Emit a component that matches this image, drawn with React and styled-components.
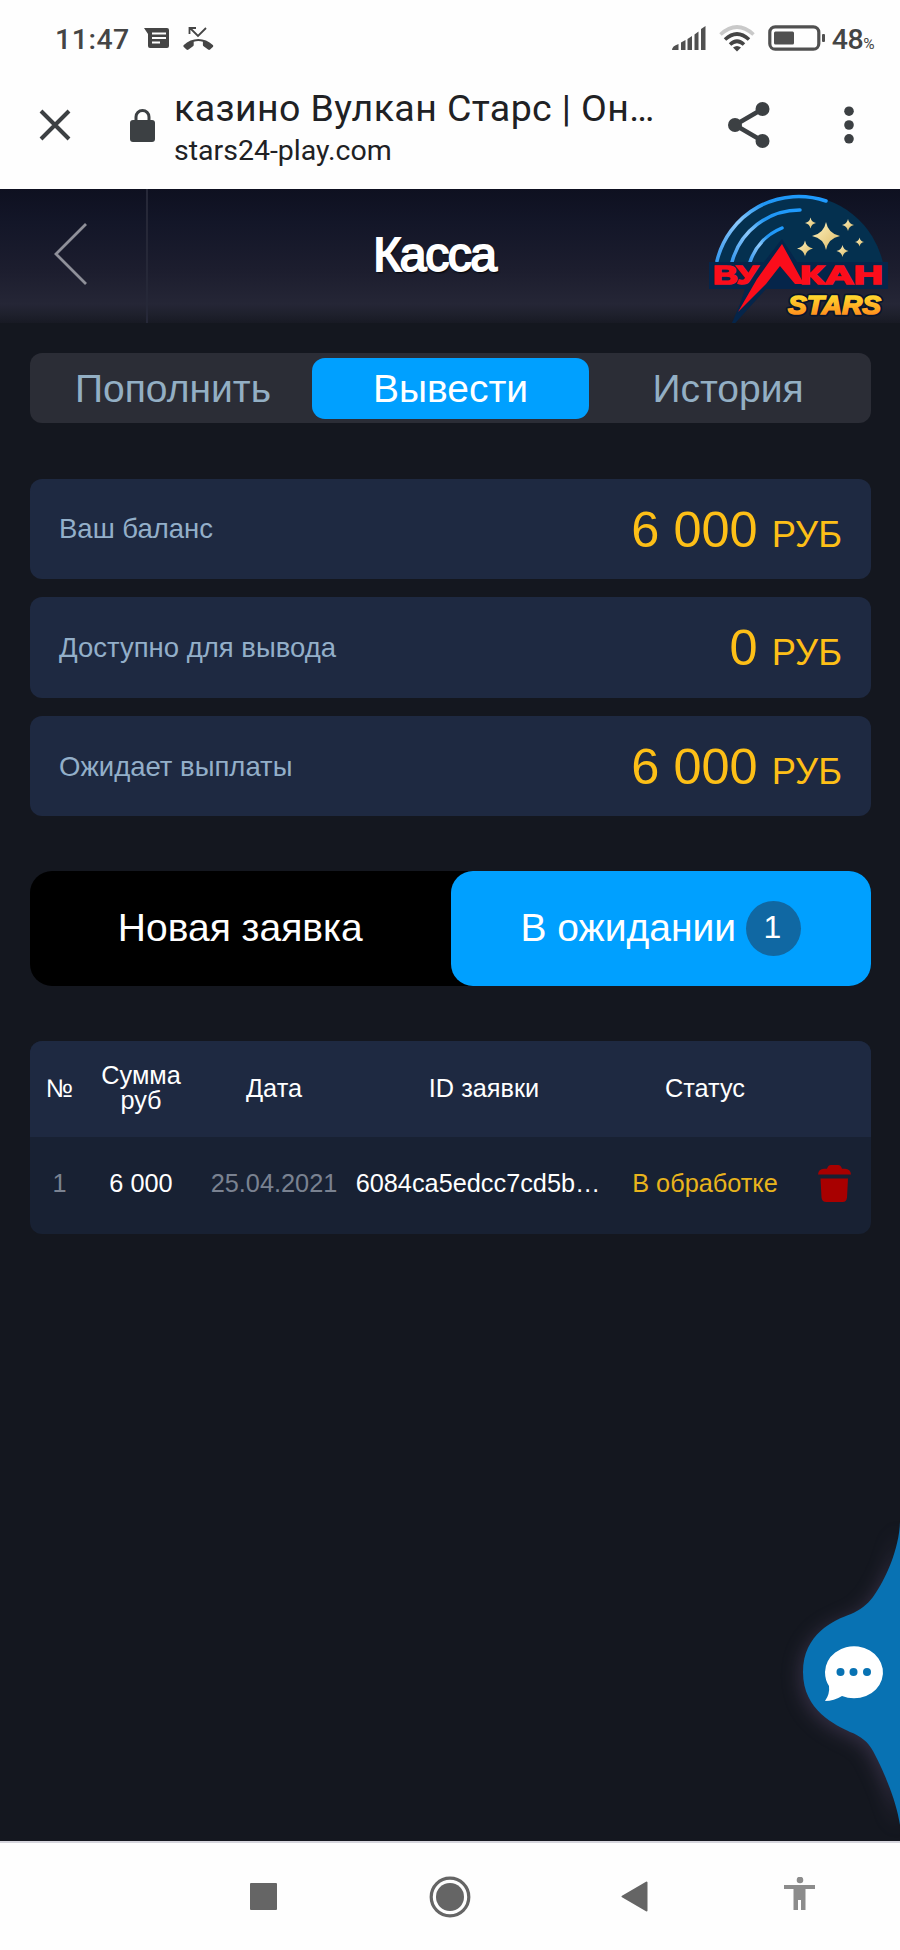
import styled, { createGlobalStyle, css } from "styled-components";

const GlobalStyle = createGlobalStyle`
  * {
    box-sizing: border-box;
  }

  body {
    margin: 0;
    background-color: #14171f;
    font-family: "Liberation Sans", Arial, sans-serif;
  }

  svg {
    display: block;
    flex-shrink: 0;
  }
`;

const Screen = styled.div`
  display: flex;
  flex-direction: column;
  width: 900px;
  height: 1950px;
  overflow: hidden;
`;

const StatusBar = styled.div`
  display: flex;
  align-items: center;
  height: 76px;
  padding: 0 26px 0 55px;
  background-color: #fefefe;
  color: #454545;
  font-family: Roboto, sans-serif;
`;

const Clock = styled.span`
  width: 89px;
  padding-top: 2px;
  font-size: 28.5px;
  font-weight: 500;
  letter-spacing: 0.5px;
  white-space: nowrap;
`;

const StatusIcons = styled.div`
  display: flex;
  align-items: center;
  gap: 13px;
  margin-right: auto;
`;

const Indicators = styled.div`
  display: flex;
  align-items: center;
`;

const Battery = styled.span`
  margin-left: 6px;
  padding-top: 2px;
  font-size: 28.5px;
  font-weight: 500;
  letter-spacing: -0.5px;
`;

const Percent = styled.small`
  font-size: 15.5px;
  font-weight: 400;
`;

const BrowserBar = styled.div`
  display: flex;
  align-items: center;
  height: 113px;
  padding: 0 41px 15px 39px;
  background-color: #fefefe;
  color: #202124;
  font-family: Roboto, sans-serif;
`;

const PageInfo = styled.div`
  width: 491px;
  margin-left: 18px;
  margin-right: 63px;
  padding-top: 8px;
  white-space: nowrap;
`;

const PageTitle = styled.div`
  font-size: 37.5px;
  line-height: 43px;
  letter-spacing: 0.4px;
`;

const PageUrl = styled.div`
  font-size: 28.5px;
  line-height: 41px;
`;

const Header = styled.header`
  display: flex;
  align-items: flex-start;
  height: 134px;
  background: linear-gradient(
    #0e1020 0%,
    #131628 25%,
    #1c1d2e 60%,
    #252636 86%,
    #1e202c 94%,
    #181a24 100%
  );
`;

const BackButton = styled.button`
  width: 148px;
  height: 134px;
  padding: 0 0 5px 54px;
  border: 0;
  border-right: 2px solid #262838;
  background: none;
`;

const HeaderTitle = styled.h1`
  flex: 1;
  margin: 0;
  padding-left: 31px;
  color: #fff;
  font-size: 48px;
  font-weight: 400;
  line-height: 132px;
  letter-spacing: -1.4px;
  text-align: center;
  text-shadow: 1px 2px 2px #000;
  -webkit-text-stroke: 2px #fff;
`;

const Content = styled.main`
  position: relative;
  flex: 1;
  padding: 30px 29px 0 30px;
  background-color: #14171f;
`;

const Tabs = styled.nav`
  display: grid;
  grid-template-columns: 277px 277px 277px;
  justify-content: space-between;
  height: 70px;
  padding: 4.5px;
  border-radius: 12px;
  background-color: #2b2d36;
`;

const Tab = styled.button`
  padding: 1px 0 0;
  border: 0;
  border-radius: 13px;
  background-color: ${({ $active }) => ($active ? "#00a0ff" : "transparent")};
  color: ${({ $active }) => ($active ? "#fff" : "#93afc4")};
  font-family: inherit;
  font-size: 39px;
`;

const Balances = styled.section`
  display: flex;
  flex-direction: column;
  gap: 18.5px;
  margin-top: 55.5px;
`;

const BalanceCard = styled.div`
  display: flex;
  justify-content: space-between;
  align-items: center;
  height: 100.3px;
  padding: 1px 29px 0 29px;
  border-radius: 12px;
  background-color: #1e2941;
`;

const BalanceLabel = styled.span`
  color: #93afc9;
  font-size: 27.5px;
`;

const BalanceValue = styled.span`
  color: #fdbf17;
  font-size: 50.5px;
`;

const Currency = styled.span`
  font-size: 36.3px;
`;

const Switcher = styled.div`
  display: grid;
  grid-template-columns: 1fr 1fr;
  height: 115px;
  margin-top: 54.5px;
  border-radius: 22px;
  background-color: #000;
`;

const SwitchButton = styled.button`
  display: flex;
  justify-content: center;
  align-items: center;
  gap: 10px;
  padding: 0;
  border: 0;
  border-radius: 22px;
  background-color: ${({ $active }) => ($active ? "#00a0ff" : "transparent")};
  color: #fff;
  font-family: inherit;
  font-size: 39px;
`;

const Badge = styled.span`
  width: 55px;
  height: 55px;
  border-radius: 50%;
  background-color: #1068a3;
  font-size: 32px;
  line-height: 53px;
  text-align: center;
  text-indent: -2px;
`;

const RequestTable = styled.section`
  margin-top: 55px;
  border-radius: 12px;
  background-color: #182133;
  overflow: hidden;
`;

const rowLayout = css`
  display: grid;
  grid-template-columns: 59px 104px 162px 258px 184px 1fr;
  align-items: center;
  justify-items: center;
  text-align: center;
  color: #fff;
  font-size: 25.3px;
  line-height: 25px;
`;

const TableHead = styled.div`
  ${rowLayout}
  height: 96px;
  padding-bottom: 1px;
  background-color: #1e2941;
`;

const TableRow = styled.div`
  ${rowLayout}
  height: 97px;
  padding-bottom: 3px;
`;

const Cell = styled.span`
  color: ${({ $color }) => $color || "#fff"};
  white-space: nowrap;
`;

const IdCell = styled(Cell)`
  margin-right: 12px;
`;

const ChatButton = styled.div`
  position: absolute;
  right: 0;
  bottom: 0;
`;

const NavBar = styled.footer`
  display: grid;
  grid-template-columns: 173px 200px 168px 1fr;
  align-items: center;
  justify-items: center;
  height: 109px;
  padding: 0 19px 0 177px;
  border-top: 2px solid #d5d5dd;
  background-color: #fefefe;
`;

const tabs = ["Пополнить", "Вывести", "История"];

const balances = [
  { label: "Ваш баланс", value: "6 000" },
  { label: "Доступно для вывода", value: "0" },
  { label: "Ожидает выплаты", value: "6 000" },
];

function StatusRow() {
  return (
    <StatusBar>
      <Clock>11:47</Clock>
      <StatusIcons>
        <svg width="26" height="22" viewBox="0 0 26 22">
          <path d="M0 1h23q2 0 2 2v16q0 2-2 2H6q-2 0-2-2V7Z" fill="#454545" />
          <path
            d="M8 6.5h14M8 11h14M8 15.5h8"
            stroke="#fff"
            strokeWidth="2"
          />
        </svg>
        <svg width="31" height="24" viewBox="0 0 31 24" fill="none">
          <path
            d="M6.5 8V2H13M7 2l8 8 8-8"
            stroke="#454545"
            strokeWidth="1.8"
          />
          <path
            d="M.8 19c8-8 21-8 29 0q.9 1 0 2l-2.7 2.5q-1 .8-2 0l-4.5-3.2q-.7-.5-.7-1.3v-3.3q-4.6-1.4-9.2 0V19q0 .8-.7 1.3l-4.5 3.2q-1 .8-2 0L.8 21q-.9-1 0-2Z"
            fill="#454545"
          />
        </svg>
      </StatusIcons>
      <Indicators>
        <svg width="34" height="26" viewBox="0 0 34 26" fill="#505050">
          <path d="M0 25q0-4 6.500-6v6ZM9 17.500l4.500-2.500v10H9ZM15.500 14l4.500-3v14h-4.500ZM22.500 9.500l4-3V25h-4ZM29 4l4.500-3v24H29Z" />
        </svg>
        <svg
          width="36"
          height="27"
          viewBox="0 0 36 27"
          fill="none"
          strokeWidth="3.6"
          style={{ marginLeft: 13 }}
        >
          <path d="M1.500 9.500q16.500-15 33 0" stroke="#c9c9c9" />
          <path d="M6 14.500q12-11 24 0M11 19.500q7-6.500 14 0" stroke="#454545" />
          <path d="m14 22.500 4 4 4-4q-4-3-8 0Z" fill="#454545" />
        </svg>
        <svg
          width="58"
          height="26"
          viewBox="0 0 58 26"
          style={{ marginLeft: 13 }}
        >
          <rect
            x="1.8"
            y="1.8"
            width="49"
            height="22.4"
            rx="5.5"
            fill="none"
            stroke="#505050"
            strokeWidth="3.2"
          />
          <rect x="6" y="6.5" width="20" height="13" rx="1.5" fill="#505050" />
          <rect x="54" y="9" width="3" height="8" rx="1" fill="#505050" />
        </svg>
        <Battery>
          48<Percent>%</Percent>
        </Battery>
      </Indicators>
    </StatusBar>
  );
}

function AddressRow() {
  return (
    <BrowserBar>
      <svg width="32" height="32" viewBox="0 0 32 32">
        <path d="m2 2 28 28M30 2 2 30" stroke="#3c4043" strokeWidth="4" />
      </svg>
      <svg
        width="26"
        height="33"
        viewBox="0 0 26 33"
        style={{ marginLeft: 59 }}
      >
        <rect y="11" width="25" height="22" rx="3" fill="#3c4043" />
        <path
          d="M6 13V8a6.500 6.500 0 0 1 13 0v5"
          fill="none"
          stroke="#3c4043"
          strokeWidth="3"
        />
      </svg>
      <PageInfo>
        <PageTitle>казино Вулкан Старс | Он…</PageTitle>
        <PageUrl>stars24-play.com</PageUrl>
      </PageInfo>
      <svg width="42" height="46" viewBox="0 0 42 46" fill="#3c4043">
        <path
          d="M34.500 7 7 23l27.500 16"
          fill="none"
          stroke="#3c4043"
          strokeWidth="4.5"
        />
        <circle cx="34.5" cy="7" r="7" />
        <circle cx="7" cy="23" r="7" />
        <circle cx="34.5" cy="39" r="7" />
      </svg>
      <svg
        width="10"
        height="38"
        viewBox="0 0 10 38"
        fill="#3c4043"
        style={{ marginLeft: 74 }}
      >
        <circle cx="5" cy="5.2" r="4.8" />
        <circle cx="5" cy="19" r="4.8" />
        <circle cx="5" cy="32.8" r="4.8" />
      </svg>
    </BrowserBar>
  );
}

function Star({ x, y, size }) {
  return (
    <path
      transform={`translate(${x} ${y}) scale(${size})`}
      d="M0-1Q.16-.16 1 0 .16.16 0 1-.16.16-1 0-.16-.16 0-1Z"
      fill="url(#starGold)"
    />
  );
}

function Logo() {
  return (
    <svg width="210" height="141" viewBox="0 4 210 141">
      <defs>
        <linearGradient id="arcBlue" x1="0" y1="1" x2="1" y2="0">
          <stop offset="0" stopColor="#3598ee" />
          <stop offset=".4" stopColor="#8cc8fb" />
          <stop offset=".65" stopColor="#2196f3" />
          <stop offset="1" stopColor="#1e9bff" />
        </linearGradient>
        <linearGradient id="starGold" x1="0" y1="0" x2="1" y2="1">
          <stop offset="0" stopColor="#fff3c0" />
          <stop offset="1" stopColor="#dcb965" />
        </linearGradient>
        <linearGradient id="starsText" x1="0" y1="0" x2="0" y2="1">
          <stop offset=".2" stopColor="#ffd92e" />
          <stop offset=".9" stopColor="#ff8a1c" />
        </linearGradient>
      </defs>
      <path d="M25 78a86 86 0 0 1 168 0Z" fill="#04304f" />
      <g
        fill="none"
        stroke="url(#arcBlue)"
        strokeWidth="3.5"
        strokeLinecap="round"
      >
        <path d="M27 76a84 84 0 0 1 109-60" />
        <path d="M42 77a70 70 0 0 1 68-52" />
        <path d="M60 77a56 56 0 0 1 32-34" />
      </g>
      <Star x={136} y={51} size={14} />
      <Star x={120.5} y={38} size={5.5} />
      <Star x={158} y={40} size={6} />
      <Star x={115} y={63.5} size={8} />
      <Star x={152.5} y={66} size={6} />
      <Star x={169.5} y={57} size={4.5} />
      <path
        d="M19 77h55L92 54l15 23h91v27H76L39 145l11-26 5-15H19Z"
        fill="#05254a"
      />
      <g
        fill="#fb0d1b"
        stroke="#fb0d1b"
        strokeWidth="1.6"
        fontFamily="Liberation Sans, Arial, sans-serif"
        fontWeight="700"
        fontSize="25"
      >
        <text x="23" y="98.500" textLength="45" lengthAdjust="spacingAndGlyphs">
          ВУ
        </text>
        <text x="110" y="98.500" textLength="83" lengthAdjust="spacingAndGlyphs">
          КАН
        </text>
      </g>
      <path d="M92 59 114 99H105L90 81 76 99 48 127 67 94Z" fill="#fb0d1b" />
      <text
        x="98"
        y="128.500"
        textLength="93"
        lengthAdjust="spacingAndGlyphs"
        fontFamily="Liberation Sans, Arial, sans-serif"
        fontWeight="700"
        fontStyle="italic"
        fontSize="26.5"
        fill="url(#starsText)"
        stroke="#08152c"
        strokeWidth="5"
        strokeLinejoin="round"
        paintOrder="stroke"
      >
        STARS
      </text>
      <text
        x="98"
        y="128.500"
        textLength="93"
        lengthAdjust="spacingAndGlyphs"
        fontFamily="Liberation Sans, Arial, sans-serif"
        fontWeight="700"
        fontStyle="italic"
        fontSize="26.5"
        fill="url(#starsText)"
        stroke="url(#starsText)"
        strokeWidth="1.6"
        aria-hidden="true"
      >
        STARS
      </text>
    </svg>
  );
}

function TrashIcon() {
  return (
    <svg width="33" height="37" viewBox="0 0 33 37" fill="#a80000">
      <path d="M0 9.500Q.5 4 6 3.800h3q1-3.800 4-3.800h7q3 0 4 3.800h3q5.500.2 6 5.700ZM2.500 13.500H30l-1 19q-.5 4.500-4.500 4.500H8.500q-4.500 0-5-4.500Z" />
    </svg>
  );
}

function Chat() {
  return (
    <ChatButton>
      <svg width="140" height="342" viewBox="760 1500 140 342">
        <path
          d="M900 1523C899 1550 886 1580 873 1598 867 1606 860 1611 851 1615 834 1621 803 1635 803 1673 803 1712 836 1726 850 1733 861 1737 868 1743 873 1752 880 1765 896 1798 900 1826Z"
          fill="#0872b3"
          style={{ filter: "drop-shadow(-3px 4px 9px rgba(92, 76, 110, 0.45))" }}
        />
        <path
          d="M825 1673a29 26 0 1 1 17 24q-8 5-17 5 5-7 4-15-4-6-4-14Z"
          fill="#fff"
        />
        <circle cx="840.5" cy="1673" r="4" fill="#0872b3" />
        <circle cx="853.5" cy="1673" r="4" fill="#0872b3" />
        <circle cx="867" cy="1673" r="4" fill="#0872b3" />
      </svg>
    </ChatButton>
  );
}

function Navigation() {
  return (
    <NavBar>
      <svg width="27" height="27" viewBox="0 0 27 27">
        <rect width="27" height="27" rx="1" fill="#656565" />
      </svg>
      <svg width="42" height="42" viewBox="0 0 42 42">
        <circle
          cx="21"
          cy="21"
          r="18.8"
          fill="none"
          stroke="#656565"
          strokeWidth="3.2"
        />
        <circle cx="21" cy="21" r="14" fill="#656565" />
      </svg>
      <svg width="27" height="31" viewBox="0 0 27 31">
        <path
          d="m1.500 15.500 24-14v28Z"
          fill="#656565"
          stroke="#656565"
          strokeWidth="2"
          strokeLinejoin="round"
        />
      </svg>
      <svg width="31" height="40" viewBox="0 1 31 40" fill="#8c8c8c">
        <circle cx="16" cy="4" r="3.3" />
        <path d="M0 9h31v4H21.500v21H17v-10h-3v10H9.500V13H0Z" />
      </svg>
    </NavBar>
  );
}

export default function App() {
  return (
    <>
      <GlobalStyle />
      <Screen>
        <StatusRow />
        <AddressRow />
        <Header>
          <BackButton type="button" aria-label="Назад">
            <svg width="34" height="62" viewBox="0 0 34 62" fill="none">
              <path d="M32 1 2 31l30 30" stroke="#8f9099" strokeWidth="2.8" />
            </svg>
          </BackButton>
          <HeaderTitle>Касса</HeaderTitle>
          <Logo />
        </Header>
        <Content>
          <Tabs>
            {tabs.map((tab) => (
              <Tab key={tab} type="button" $active={tab === "Вывести"}>
                {tab}
              </Tab>
            ))}
          </Tabs>
          <Balances>
            {balances.map(({ label, value }) => (
              <BalanceCard key={label}>
                <BalanceLabel>{label}</BalanceLabel>
                <BalanceValue>
                  {value} <Currency>РУБ</Currency>
                </BalanceValue>
              </BalanceCard>
            ))}
          </Balances>
          <Switcher>
            <SwitchButton type="button">Новая заявка</SwitchButton>
            <SwitchButton type="button" $active>
              В ожидании <Badge>1</Badge>
            </SwitchButton>
          </Switcher>
          <RequestTable>
            <TableHead>
              <Cell>№</Cell>
              <Cell>
                Сумма
                <br />
                руб
              </Cell>
              <Cell>Дата</Cell>
              <Cell>ID заявки</Cell>
              <Cell>Статус</Cell>
            </TableHead>
            <TableRow>
              <Cell $color="#7a8291">1</Cell>
              <Cell>6 000</Cell>
              <Cell $color="#7a8291">25.04.2021</Cell>
              <IdCell>6084ca5edcc7cd5b…</IdCell>
              <Cell $color="#e9b41c">В обработке</Cell>
              <TrashIcon />
            </TableRow>
          </RequestTable>
          <Chat />
        </Content>
        <Navigation />
      </Screen>
    </>
  );
}
